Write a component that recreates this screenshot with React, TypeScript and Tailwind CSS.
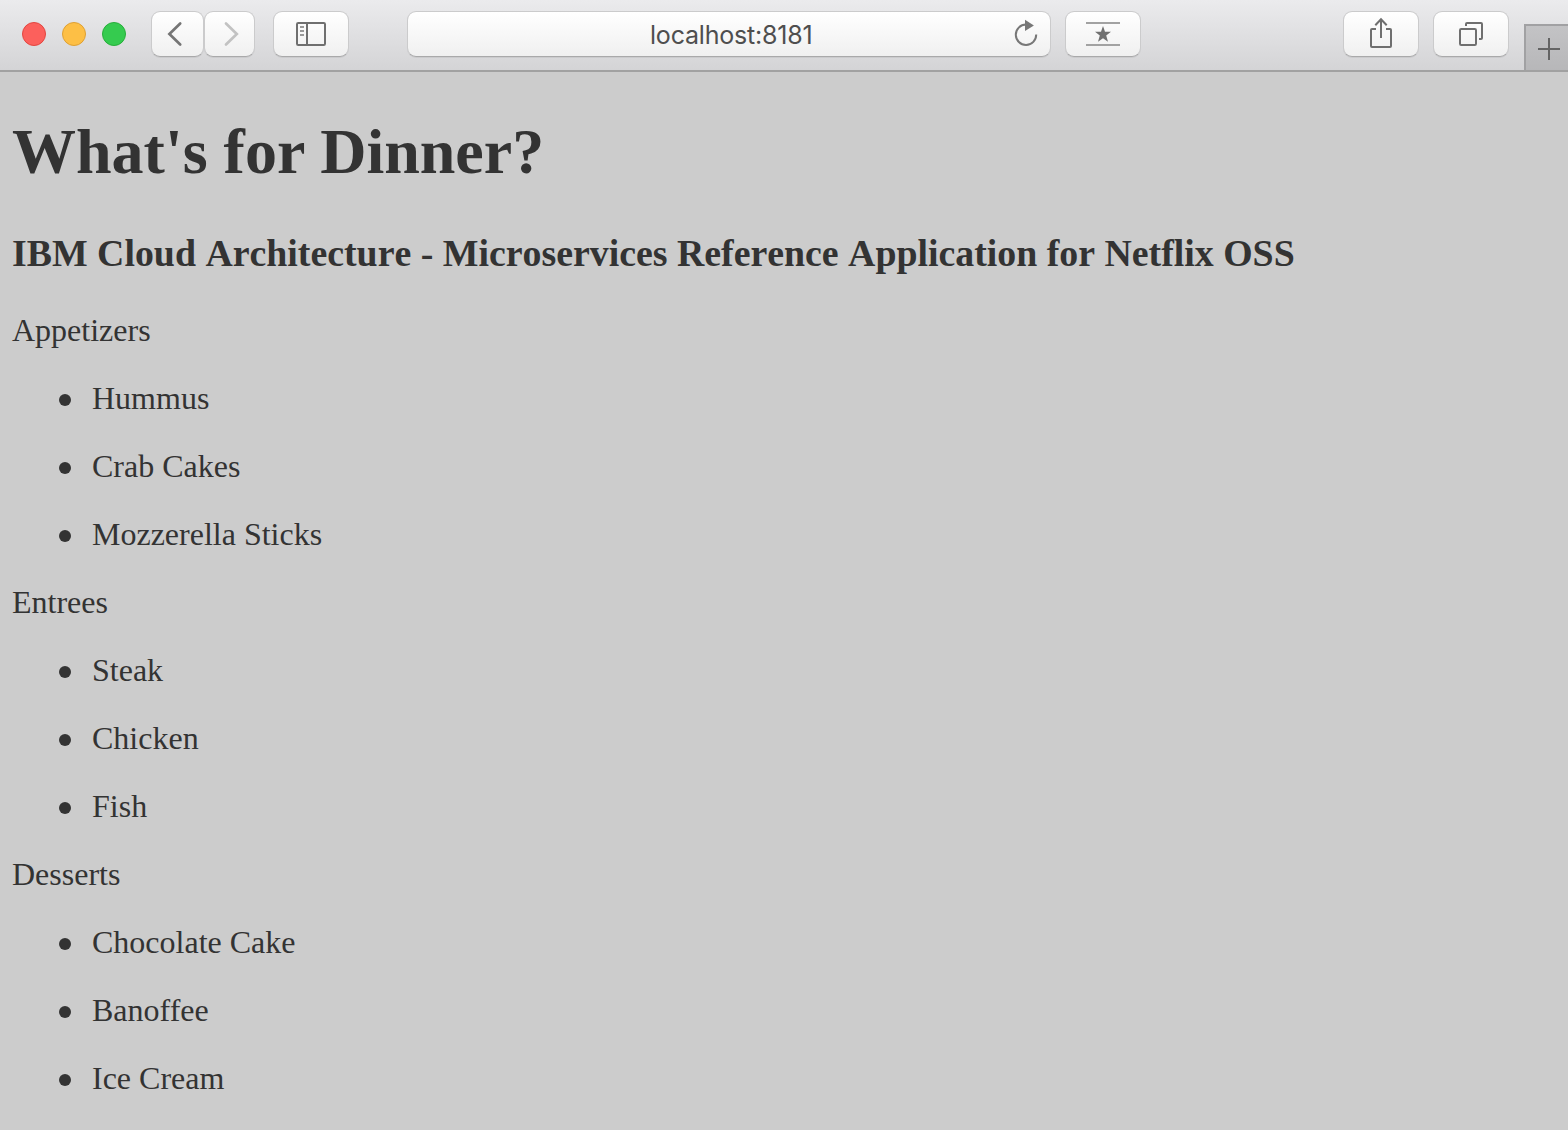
import type { ReactNode } from "react";

const menu = [
  { course: "Appetizers", dishes: ["Hummus", "Crab Cakes", "Mozzerella Sticks"] },
  { course: "Entrees", dishes: ["Steak", "Chicken", "Fish"] },
  { course: "Desserts", dishes: ["Chocolate Cake", "Banoffee", "Ice Cream"] },
];

const surface =
  "flex h-[46px] shrink-0 items-center justify-center rounded-[9px] border border-[#cbcbcc] border-b-[#a9a9aa] bg-gradient-to-b from-white to-[#f0f0f0] bg-clip-padding shadow-[0_1px_0_rgba(0,0,0,0.06)]";

function ToolButton({ label, className, children }: { label: string; className: string; children: ReactNode }) {
  return (
    <button type="button" aria-label={label} className={`${surface} ${className}`}>
      <svg width="44" height="44" viewBox="0 0 44 44" fill="none" stroke="#6f6f6f" strokeWidth="2" className="shrink-0">
        {children}
      </svg>
    </button>
  );
}

function Toolbar() {
  return (
    <header className="flex h-[72px] items-start border-b-2 border-[#a1a1a1] bg-gradient-to-b from-[#ebebed] to-[#d4d4d6] pl-[22px] pt-[11px]">
      <div className="flex h-[46px] items-center gap-4">
        <span className="size-6 rounded-full border border-[#e24640] bg-[#fc605c]" />
        <span className="size-6 rounded-full border border-[#dea034] bg-[#fdbf45]" />
        <span className="size-6 rounded-full border border-[#27ae3a] bg-[#35cb4f]" />
      </div>
      <ToolButton label="Back" className="ml-[25px] w-[53px]">
        <path d="M24.2 11.5 L13.4 22 L24.2 32.5" strokeWidth="2.7" strokeLinecap="round" stroke="#757575" />
      </ToolButton>
      <ToolButton label="Forward" className="w-[51px]">
        <path d="M18 11.5 L28.8 22 L18 32.5" strokeWidth="2.7" strokeLinecap="round" stroke="#c2c2c2" />
      </ToolButton>
      <ToolButton label="Sidebar" className="ml-[18px] w-[76px]">
        <rect x="8" y="11" width="28" height="22" rx="1.2" />
        <path d="M18 11 V33" />
        <path d="M11 15 H15 M11 19 H15 M11 23 H15" stroke="#999" />
      </ToolButton>
      <div className={`${surface} ml-[58px] w-[644px]`}>
        <span className="ml-[242px] mt-[2px] flex-1 whitespace-nowrap text-left font-['Inter','Roboto',sans-serif] text-[25px] leading-[44px] tracking-[-0.2px] text-[#4e4e4e]">
          localhost:8181
        </span>
        <svg width="28" height="44" viewBox="0 0 28 44" fill="none" stroke="#777" strokeWidth="2" className="mr-[10px]">
          <path d="M14.5 12.6 H14 A10.2 10.2 0 1 0 24.2 22.6" />
          <path d="M13 7.8 L21.9 13.4 L13 19 Z" fill="#777" stroke="none" />
        </svg>
      </div>
      <ToolButton label="Top Sites" className="ml-[14px] w-[76px]">
        <path d="M5 11 H39 M5 33 H39" stroke="#a2a2a2" />
        <path d="M22 14 L24 19.8 H30 L25.2 23.6 L27 29.8 L22 26.2 L17 29.8 L18.8 23.6 L14 19.8 H20 Z" fill="#707070" stroke="none" />
      </ToolButton>
      <ToolButton label="Share" className="ml-[202px] w-[76px]">
        <path d="M17 17 H13 Q12 17 12 18 V34 Q12 35 13 35 H31 Q32 35 32 34 V18 Q32 17 31 17 H27" />
        <path d="M22 26 V7 M16.3 13.3 L22 7.3 L27.7 13.3" />
      </ToolButton>
      <ToolButton label="Tabs" className="ml-[14px] w-[76px]">
        <rect x="11" y="17" width="16" height="16" rx="1.2" />
        <path d="M17 14 V12 Q17 11 18 11 H32 Q33 11 33 12 V26 Q33 27 32 27 H30" />
      </ToolButton>
      <button
        type="button"
        aria-label="New tab"
        className="ml-[15px] mt-[13px] flex h-[46px] w-11 shrink-0 items-center justify-center border-l-2 border-t-2 border-[#a1a1a3] bg-gradient-to-b from-[#c3c3c5] to-[#b7b7b9]"
      >
        <svg width="42" height="44" viewBox="0 0 42 44" fill="none" stroke="#646464" strokeWidth="2" className="shrink-0">
          <path d="M12 23 H34 M23 12 V34" />
        </svg>
      </button>
    </header>
  );
}

export default function App() {
  return (
    <div className="h-[1130px] w-[1568px] overflow-hidden bg-[#cccccc]">
      <Toolbar />
      <main className="px-3 font-['Liberation_Serif',serif] text-[32px] leading-[68px] text-[#333333]">
        <h1 className="pt-px text-[64px] font-bold leading-[158px]">What's for Dinner?</h1>
        <h3 className="mb-[21px] whitespace-nowrap text-[37.85px] font-bold leading-[44px] [font-kerning:none]">
          IBM Cloud Architecture - Microservices Reference Application for Netflix OSS
        </h3>
        {menu.map(({ course, dishes }) => (
          <section key={course}>
            <p>{course}</p>
            <ul>
              {dishes.map((dish) => (
                <li key={dish} className="flex items-center pl-[47px]">
                  <span className="mr-[21px] mt-1 size-3 rounded-full bg-[#333333]" />
                  {dish}
                </li>
              ))}
            </ul>
          </section>
        ))}
      </main>
    </div>
  );
}
